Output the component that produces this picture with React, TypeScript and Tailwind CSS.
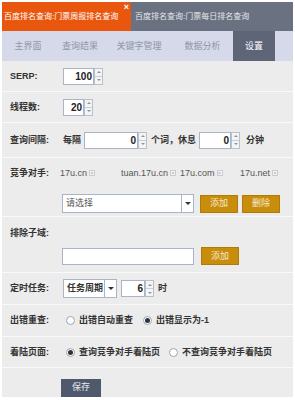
import { useState } from "react";

const NAV = [
  { name: "主界面", w: "w-[52px]" },
  { name: "查询结果", w: "w-[52px]" },
  { name: "关键字管理", w: "w-[66px]" },
  { name: "数据分析", w: "w-[61px]" },
];
const RIVALS = [
  { name: "17u.cn", w: "w-[61px]" },
  { name: "tuan.17u.cn", w: "w-[59px]" },
  { name: "17u.com", w: "w-[60px]" },
  { name: "17u.net", w: "w-auto" },
];

const font = "font-['Liberation_Sans','Noto_Sans_CJK_SC',sans-serif]";
const txt = "text-[9px] font-bold text-[#333] leading-none whitespace-nowrap";

function Spinner() {
  return (
    <div className="flex flex-col w-[9px] h-[17px] border border-[#b8c0cc] bg-[#f4f4f4]">
      <div className="flex-1 flex items-center justify-center border-b border-[#c8ced6]">
        <span className="block w-0 h-0 border-x-[2px] border-x-transparent border-b-[2px] border-b-[#8a94a4]" />
      </div>
      <div className="flex-1 flex items-center justify-center">
        <span className="block w-0 h-0 border-x-[2px] border-x-transparent border-t-[2px] border-t-[#8a94a4]" />
      </div>
    </div>
  );
}

function NumberBox({ value, w }: { value: string; w: string }) {
  return (
    <div className="flex items-center">
      <div
        className={`${w} h-[17px] bg-white border border-[#aab4c4] flex items-center justify-end pr-[1px] text-[10px] font-bold text-[#222]`}
      >
        {value}
      </div>
      <Spinner />
    </div>
  );
}

function Row({ label, h, children }: { label: string; h: string; children?: React.ReactNode }) {
  return (
    <div className={`${h} flex items-center border-b border-[#f9f9f9] pl-[8px]`}>
      <div className={`w-[53px] shrink-0 ${txt}`}>{label}</div>
      {children}
    </div>
  );
}

function Radio({ checked, label }: { checked?: boolean; label: string }) {
  return (
    <label className={`flex items-center gap-[4px] ${txt}`}>
      <span className="w-[9px] h-[9px] rounded-full border border-[#9aa6b8] bg-white flex items-center justify-center">
        {checked && <span className="w-[5px] h-[5px] rounded-full bg-[#333]" />}
      </span>
      {label}
    </label>
  );
}

function GoldButton({ children, w = "w-[38px]" }: { children: React.ReactNode; w?: string }) {
  return (
    <button
      className={`${w} h-[18px] bg-[#c98d0c] border border-[#b07a08] text-[#f6ead0] text-[9px] leading-none flex items-center justify-center`}
    >
      {children}
    </button>
  );
}

function Caret() {
  return (
    <div className="w-[12px] border-l border-[#a8b4c8] flex items-center justify-center">
      <span className="block w-0 h-0 border-x-[3px] border-x-transparent border-t-[3px] border-t-[#333]" />
    </div>
  );
}

export default function App() {
  const [tab] = useState(4);

  return (
    <div className={`w-[295px] h-[400px] bg-white p-[2px] ${font}`}>
      <div className="w-[291px] flex h-[29px]">
        <div className="relative w-[129px] bg-[#e9570f] text-white text-[8px] leading-none whitespace-nowrap flex items-center pl-[2px]">
          百度排名查询:门票周报排名查询
          <span className="absolute right-[2px] top-[1px] text-[9px] font-bold leading-none">×</span>
        </div>
        <div className="flex-1 bg-[#6a7282] text-[#e4e6ea] text-[8px] leading-none whitespace-nowrap flex items-center pl-[4px]">
          百度排名查询:门票每日排名查询
        </div>
      </div>
      <div className="w-[291px] h-[30px] bg-[#d5d9e9] flex text-[9px] leading-none text-[#9097a8]">
        {NAV.map((n) => (
          <div key={n.name} className={`flex items-center justify-center ${n.w}`}>
            {n.name}
          </div>
        ))}
        <div
          className={`w-[42px] flex items-center justify-center ${
            tab === 4 ? "bg-[#5e6576] text-white" : ""
          }`}
        >
          设置
        </div>
      </div>

      <div className="w-[291px] bg-[#ececec] h-[336px]">
        <Row label="SERP:" h="h-[31px]">
          <NumberBox value="100" w="w-[31px]" />
        </Row>
        <Row label="线程数:" h="h-[31px]">
          <NumberBox value="20" w="w-[21px]" />
        </Row>
        <Row label="查询间隔:" h="h-[35px]">
          <span className={`${txt} mr-[3px]`}>每隔</span>
          <NumberBox value="0" w="w-[54px]" />
          <span className={`${txt} ml-[4px] mr-[3px]`}>个词，休息</span>
          <NumberBox value="0" w="w-[32px]" />
          <span className={`${txt} ml-[6px]`}>分钟</span>
        </Row>
        <div className="h-[59px] border-b border-[#f9f9f9] pl-[8px] pt-[9px]">
          <div className="flex items-center h-[12px]">
            <div className={`w-[50px] shrink-0 ${txt}`}>竞争对手:</div>
            {RIVALS.map((r) => (
              <div key={r.name} className={`${r.w} flex items-center text-[9px] leading-none text-[#555]`}>
                {r.name}
                <span className="ml-[2px] w-[6px] h-[6px] border border-[#ccc] bg-[#f4f4f4] text-[5px] leading-none text-[#aaa] flex items-center justify-center">
                  ×
                </span>
              </div>
            ))}
          </div>
          <div className="flex items-center mt-[15px] pl-[52px]">
            <div className="w-[132px] h-[19px] bg-white border border-[#a8b4c8] flex">
              <div className="flex-1 text-[9px] leading-none text-[#555] pl-[3px] flex items-center">请选择</div>
              <Caret />
            </div>
            <div className="ml-[6px]">
              <GoldButton>添加</GoldButton>
            </div>
            <div className="ml-[4px]">
              <GoldButton>删除</GoldButton>
            </div>
          </div>
        </div>
        <div className="h-[56px] border-b border-[#f9f9f9] pl-[8px] pt-[10px]">
          <div className={`${txt} h-[12px] flex items-center`}>排除子域:</div>
          <div className="flex items-center mt-[8px] pl-[52px]">
            <div className="w-[132px] h-[17px] bg-white border border-[#a8b4c8]" />
            <div className="ml-[7px]">
              <GoldButton>添加</GoldButton>
            </div>
          </div>
        </div>
        <Row label="定时任务:" h="h-[32px]">
          <div className="w-[54px] h-[19px] bg-white border border-[#a8b4c8] flex">
            <div className={`flex-1 ${txt} pl-[3px] flex items-center`}>任务周期</div>
            <Caret />
          </div>
          <div className="ml-[4px]">
            <NumberBox value="6" w="w-[24px]" />
          </div>
          <span className={`${txt} ml-[4px]`}>时</span>
        </Row>
        <Row label="出错重查:" h="h-[32px]">
          <div className="flex items-center gap-[10px] pl-[3px]">
            <Radio label="出错自动重查" />
            <Radio checked label="出错显示为-1" />
          </div>
        </Row>
        <Row label="着陆页面:" h="h-[31px]">
          <div className="flex items-center gap-[9px] pl-[3px]">
            <Radio checked label="查询竞争对手着陆页" />
            <Radio label="不查询竞争对手着陆页" />
          </div>
        </Row>
        <div className="h-[29px] pl-[59px] pt-[5px]">
          <button className="w-[40px] h-[18px] bg-[#4f596c] text-[#e8eaf0] text-[9px] leading-none">保存</button>
        </div>
      </div>
    </div>
  );
}
